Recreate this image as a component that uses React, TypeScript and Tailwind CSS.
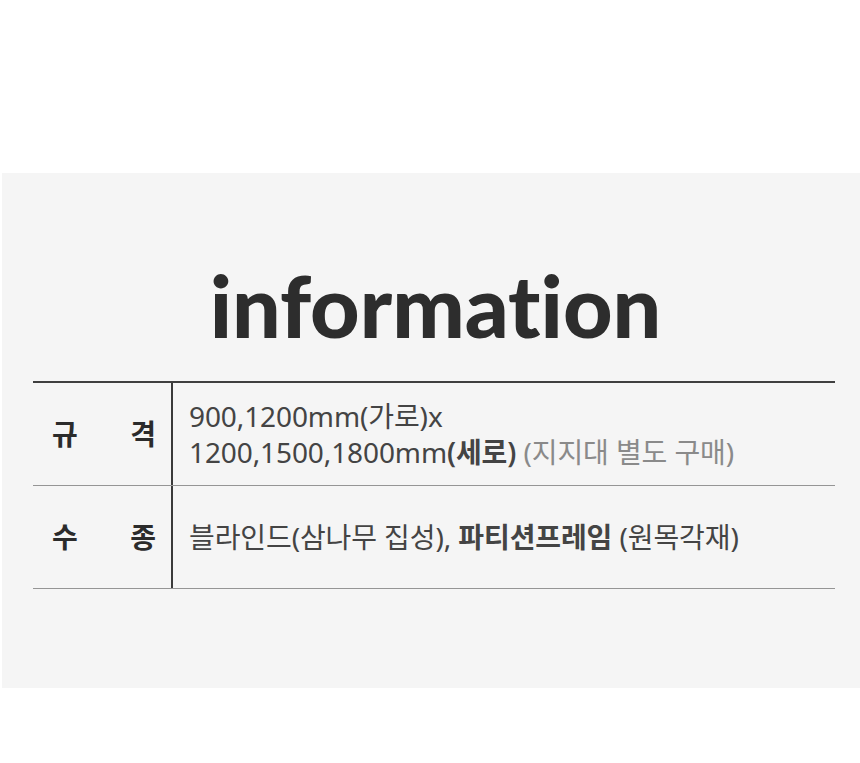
const kr = { fontFamily: '"Noto Sans", "Noto Sans CJK KR", sans-serif' };

function Row({
  label,
  children,
}: {
  label: [string, string];
  children: React.ReactNode;
}) {
  return (
    <div className="flex h-[103px] border-b border-[#959595]">
      <div className="flex w-[140px] shrink-0 items-center justify-between border-r-2 border-[#3a3a3a] pl-[19px] pr-[15px] text-[28px] font-bold text-[#2b2b2b]">
        <span>{label[0]}</span>
        <span>{label[1]}</span>
      </div>
      <div className="flex flex-col justify-center pl-[16px] text-[28px] leading-[36px] tracking-[-0.1px] text-[#444]">
        {children}
      </div>
    </div>
  );
}

export default function App() {
  return (
    <div className="min-h-[763px] w-[860px] bg-white pt-[173px]" style={kr}>
      <div className="ml-[2px] h-[515px] bg-[#f5f5f5]">
        <h1
          className="pl-[9px] pt-[82px] text-center text-[86px] font-black leading-[100px] text-[#2d2d2d]"
          style={{ fontFamily: "Lato, sans-serif", fontVariantLigatures: "none" }}
        >
          information
        </h1>
        <div className="ml-[31px] mt-[26px] w-[802px] border-t-2 border-[#3f3f3f]">
          <Row label={["규", "격"]}>
            <div>900,1200mm(가로)x</div>
            <div>
              1200,1500,1800mm<span className="font-semibold">(세로)</span>{" "}
              <span className="text-[#8a8a8a]">(지지대 별도 구매)</span>
            </div>
          </Row>
          <Row label={["수", "종"]}>
            <div>
              블라인드(삼나무 집성), <span className="font-bold">파티션프레임</span> (원목각재)
            </div>
          </Row>
        </div>
      </div>
    </div>
  );
}
